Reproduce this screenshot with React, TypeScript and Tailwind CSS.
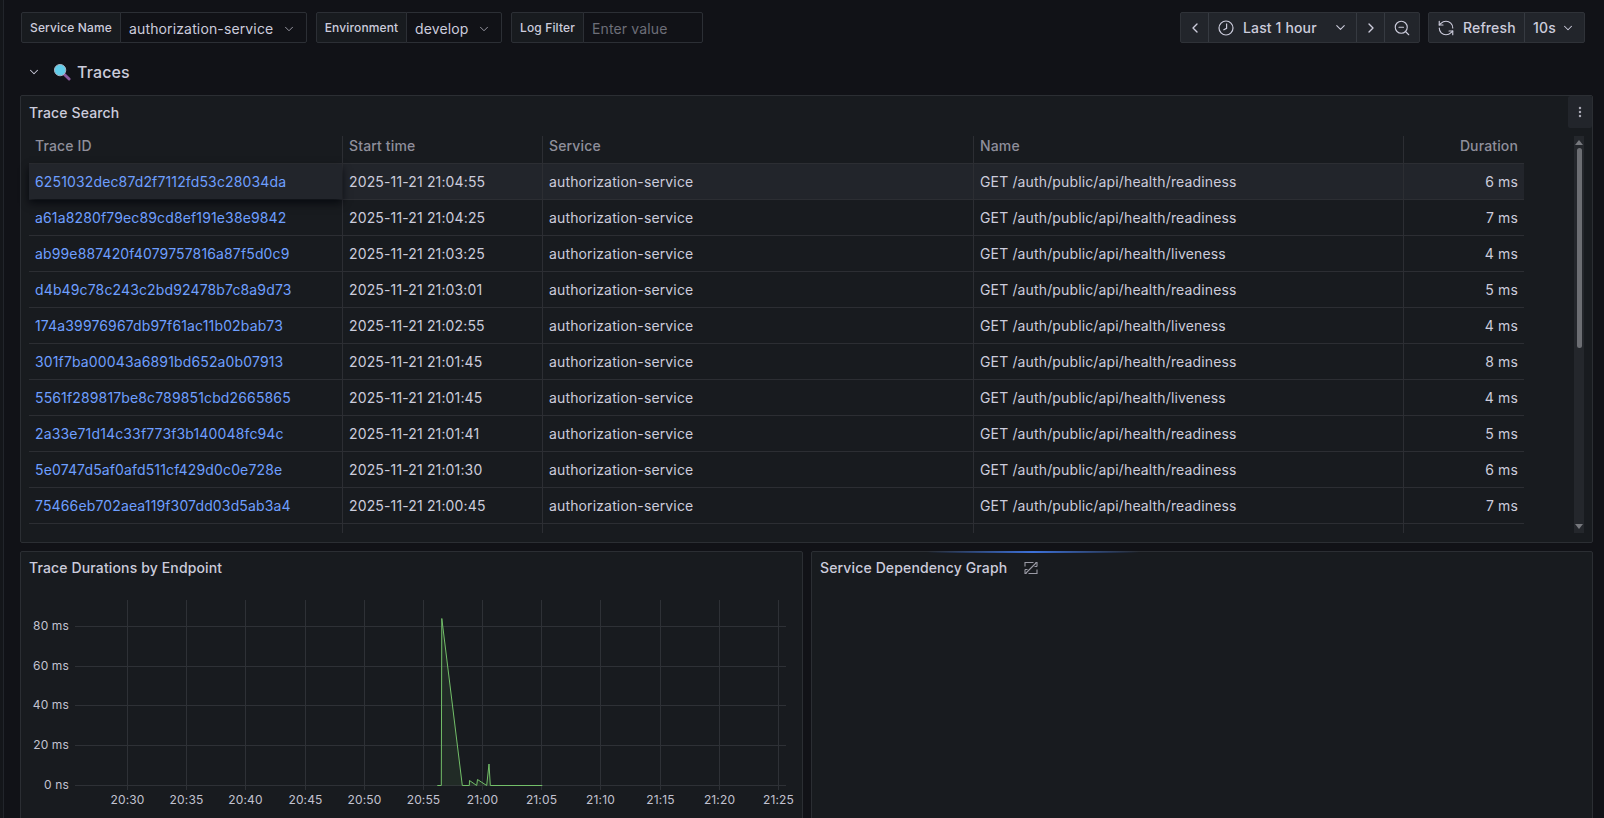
import { ChevronDown, ChevronLeft, ChevronRight, ZoomOut, RefreshCcw, EllipsisVertical } from "lucide-react";

const rows = [
  ["6251032dec87d2f7112fd53c28034da", "2025-11-21 21:04:55", "GET /auth/public/api/health/readiness", "6 ms"],
  ["a61a8280f79ec89cd8ef191e38e9842", "2025-11-21 21:04:25", "GET /auth/public/api/health/readiness", "7 ms"],
  ["ab99e887420f4079757816a87f5d0c9", "2025-11-21 21:03:25", "GET /auth/public/api/health/liveness", "4 ms"],
  ["d4b49c78c243c2bd92478b7c8a9d73", "2025-11-21 21:03:01", "GET /auth/public/api/health/readiness", "5 ms"],
  ["174a39976967db97f61ac11b02bab73", "2025-11-21 21:02:55", "GET /auth/public/api/health/liveness", "4 ms"],
  ["301f7ba00043a6891bd652a0b07913", "2025-11-21 21:01:45", "GET /auth/public/api/health/readiness", "8 ms"],
  ["5561f289817be8c789851cbd2665865", "2025-11-21 21:01:45", "GET /auth/public/api/health/liveness", "4 ms"],
  ["2a33e71d14c33f773f3b140048fc94c", "2025-11-21 21:01:41", "GET /auth/public/api/health/readiness", "5 ms"],
  ["5e0747d5af0afd511cf429d0c0e728e", "2025-11-21 21:01:30", "GET /auth/public/api/health/readiness", "6 ms"],
  ["75466eb702aea119f307dd03d5ab3a4", "2025-11-21 21:00:45", "GET /auth/public/api/health/readiness", "7 ms"],
];

const cols = "grid grid-cols-[313px_200px_431px_430px_121px]";
const cellBorder = "border-l border-[#2c2e33]";

function Variable({ label, labelW, valueW, children }: { label: string; labelW: string; valueW: string; children: React.ReactNode }) {
  return (
    <div className="flex h-[31px]">
      <div className={`${labelW} flex items-center justify-center rounded-l-[2px] border border-[#2c2f35] bg-[#181b1f] text-xs font-medium text-[#ccccdc]`}>{label}</div>
      <div className={`${valueW} -ml-px flex items-center justify-between rounded-r-[2px] border border-[#2c2f35] bg-[#111217] pl-[8px] pr-[10px] pt-[2px] text-sm text-[#ccccdc]`}>{children}</div>
    </div>
  );
}

function TraceRow({ r, i }: { r: string[]; i: number }) {
  const hover = i === 0;
  return (
    <div className={`${cols} h-9 border-b border-[#2c2e33] ${hover ? "bg-[#22252b]" : ""}`}>
      <div className={`flex items-center pl-[6px] pt-[1px] text-[#6e9fff] ${hover ? "shadow-[0_4px_8px_rgba(1,4,9,0.75)] relative" : ""}`}>{r[0]}</div>
      <div className={`flex items-center pl-[6px] pt-[1px] ${cellBorder}`}>{r[1]}</div>
      <div className={`flex items-center pl-[6px] pt-[1px] ${cellBorder}`}>authorization-service</div>
      <div className={`flex items-center pl-[6px] pt-[1px] ${cellBorder}`}>{r[2]}</div>
      <div className={`flex items-center justify-end pr-[6px] pt-[1px] ${cellBorder}`}>{r[3]}</div>
    </div>
  );
}

function Chart() {
  const xs = ["20:30", "20:35", "20:40", "20:45", "20:50", "20:55", "21:00", "21:05", "21:10", "21:15", "21:20", "21:25"];
  const ys: [string, number][] = [["80 ms", 626.5], ["60 ms", 666.5], ["40 ms", 705.5], ["20 ms", 745.5], ["0 ns", 785.5]];
  const pts = "437.3,785.5 441.3,785.5 441.8,618.5 462.3,785.5 469.3,785.5 469.5,780.5 476.7,785.5 477.5,779.5 486.7,785.5 489,764 490.3,785.5 542.3,785.5";
  return (
    <svg viewBox="21 590 774 228" width="774" height="228" className="block font-['Inter',sans-serif]">
      {ys.map(([t, y]) => (
        <g key={t}>
          <line x1="75" x2="786" y1={y} y2={y} stroke="#2e3136" />
          <text x="69" y={y + 3.5} textAnchor="end" fontSize="12" fill="#c2c2d0">{t}</text>
        </g>
      ))}
      {xs.map((t, i) => {
        const x = Math.round(127 + i * 59.17) + 0.5;
        return (
          <g key={t}>
            <line x1={x} x2={x} y1="600" y2="790" stroke="#2e3136" />
            <text x={x} y="804" textAnchor="middle" fontSize="12" fill="#c2c2d0">{t}</text>
          </g>
        );
      })}
      <polygon points={pts} fill="#73bf69" fillOpacity="0.1" />
      <polyline points={pts} fill="none" stroke="#73bf69" strokeWidth="1" />
    </svg>
  );
}

export default function App() {
  return (
    <div className="flex h-[818px] w-[1604px] overflow-hidden bg-[#111217] font-['Inter','Liberation_Sans',sans-serif] text-sm tracking-[0.14px] text-[#ccccdc]">
      <div className="w-[4px] shrink-0 border-r border-[#22252b] bg-[#14161a]" />
      <div className="flex w-[1589px] flex-col pl-[16px]">
        {/* toolbar */}
        <div className="mt-[12px] flex shrink-0 justify-between pl-[1px] pr-[8px]">
          <div className="flex gap-[9px]">
            <Variable label="Service Name" labelW="w-[100px]" valueW="w-[187px]">
              <span>authorization-service</span>
              <ChevronDown size={14} strokeWidth={1.5} className="text-[#a8a8b4]" />
            </Variable>
            <Variable label="Environment" labelW="w-[91px]" valueW="w-[96px]">
              <span>develop</span>
              <ChevronDown size={14} strokeWidth={1.5} className="text-[#a8a8b4]" />
            </Variable>
            <Variable label="Log Filter" labelW="w-[73px]" valueW="w-[120px]">
              <span className="text-[#6d6e78]">Enter value</span>
            </Variable>
          </div>
          <div className="flex gap-[8px]">
            <div className="flex h-[31px] rounded-[2px] border border-[#2f3238] bg-[#22252b] font-medium">
              <div className="flex w-[27px] items-center justify-center"><ChevronLeft size={16} strokeWidth={2} /></div>
              <div className="flex w-[148px] items-center border-l border-[#363a41] pl-[9px]">
                <svg width="16" height="16" viewBox="0 0 16 16" fill="none" stroke="#ccccdc" strokeWidth="1.2">
                  <circle cx="8" cy="8" r="7" />
                  <path d="M8.6 3.6V8.4L5.4 10" />
                </svg>
                <span className="ml-[9px]">Last 1 hour</span>
                <ChevronDown size={15} strokeWidth={1.75} className="ml-[16px]" />
              </div>
              <div className="flex w-[28px] items-center justify-center border-l border-[#363a41]"><ChevronRight size={16} strokeWidth={2} /></div>
              <div className="flex w-[35px] items-center justify-center border-l border-[#363a41]"><ZoomOut size={18} strokeWidth={1.5} /></div>
            </div>
            <div className="flex h-[31px] rounded-[2px] border border-[#2f3238] bg-[#22252b] font-medium">
              <div className="flex w-[95px] items-center pl-[8px]">
                <RefreshCcw size={18} strokeWidth={1.5} />
                <span className="ml-[8px]">Refresh</span>
              </div>
              <div className="flex w-[60px] items-center border-l border-[#363a41] pl-[8px]">
                <span>10s</span>
                <ChevronDown size={14} strokeWidth={1.75} className="ml-[5px]" />
              </div>
            </div>
          </div>
        </div>

        {/* row header */}
        <div className="flex h-[52px] shrink-0 items-center pl-[7px] pt-[5px]">
          <ChevronDown size={14} strokeWidth={1.75} className="text-[#ccccdc]" />
          <svg width="18" height="18" viewBox="0 0 19 19" className="ml-[12px]">
            <line x1="11" y1="11" x2="17" y2="17" stroke="#8b5a9e" strokeWidth="3" strokeLinecap="round" />
            <circle cx="7.5" cy="7.5" r="6" fill="#62cdea" stroke="#a9b5c4" strokeWidth="1" />
          </svg>
          <span className="ml-[6px] text-base font-medium">Traces</span>
        </div>

        {/* trace search panel */}
        <div className="h-[448px] shrink-0 rounded-[2px] border border-[#2b2e33] bg-[#181b1f]">
          <div className="flex h-[40px] items-start justify-between pl-[8px]">
            <span className="mt-[7px] font-medium">Trace Search</span>
            <div className="flex h-[32px] w-[24px] items-center justify-center rounded-[2px] bg-[#22252b]">
              <EllipsisVertical size={14} strokeWidth={2.25} className="text-[#a8a8b4]" />
            </div>
          </div>
          <div className="flex justify-between pl-[8px] pr-[8px]">
            <div className="w-[1495px]">
              <div className={`${cols} h-[28px] border-b border-[#2c2e33] font-medium text-[#8f8f9b]`}>
                <div className="flex items-center pb-[7px] pl-[6px]">Trace ID</div>
                <div className={`flex items-center pb-[7px] pl-[6px] ${cellBorder}`}>Start time</div>
                <div className={`flex items-center pb-[7px] pl-[6px] ${cellBorder}`}>Service</div>
                <div className={`flex items-center pb-[7px] pl-[6px] ${cellBorder}`}>Name</div>
                <div className={`flex items-center justify-end pb-[7px] pr-[6px] ${cellBorder}`}>Duration</div>
              </div>
              {rows.map((r, i) => (
                <TraceRow key={r[0]} r={r} i={i} />
              ))}
              <div className={`${cols} h-[9px]`}>
                <div />
                <div className={cellBorder} />
                <div className={cellBorder} />
                <div className={cellBorder} />
                <div className={cellBorder} />
              </div>
            </div>
            <div className="flex h-[397px] w-[10px] flex-col items-center bg-[#24272c]">
              <div className="mt-[4px] h-0 w-0 border-x-[4px] border-b-[5px] border-x-transparent border-b-[#77797e]" />
              <div className="mt-[3px] h-[200px] w-[5px] rounded-[3px] bg-[#6c6e73]" />
              <div className="flex-1" />
              <div className="mb-[4px] h-0 w-0 border-x-[4px] border-t-[5px] border-x-transparent border-t-[#77797e]" />
            </div>
          </div>
        </div>

        {/* bottom panels */}
        <div className="mt-[8px] flex shrink-0 gap-[8px]">
          <div className="h-[300px] w-[783px] rounded-[2px] border border-[#2b2e33] bg-[#181b1f]">
            <div className="flex h-[38px] items-center pb-[9px] pl-[8px] pt-[2px] font-medium">Trace Durations by Endpoint</div>
            <Chart />
          </div>
          <div className="relative h-[300px] w-[782px] rounded-[2px] border border-[#2b2e33] bg-[#181b1f]">
            <div className="absolute -top-px left-[115px] h-[2px] w-[212px] bg-[linear-gradient(90deg,transparent,#3d71d9_50%,transparent)]" />
            <div className="flex h-[38px] items-center pb-[9px] pl-[8px] pt-[2px] font-medium">
              <span>Service Dependency Graph</span>
              <svg width="14" height="14" viewBox="0 0 14 14" fill="none" stroke="#9a9aa5" strokeWidth="1.1" className="ml-[17px]">
                <path d="M1 5.5V1.5H9.5M13 8.5V12.5H4.5" />
                <path d="M1.5 12.5L12.5 1.5" />
                <path d="M1 8.5V12.5H2.5M13 5.5V1.5H11.5" />
                <path d="M1 8.5H3.5M13 5.5H10.5" />
              </svg>
            </div>
          </div>
        </div>
      </div>
    </div>
  );
}
